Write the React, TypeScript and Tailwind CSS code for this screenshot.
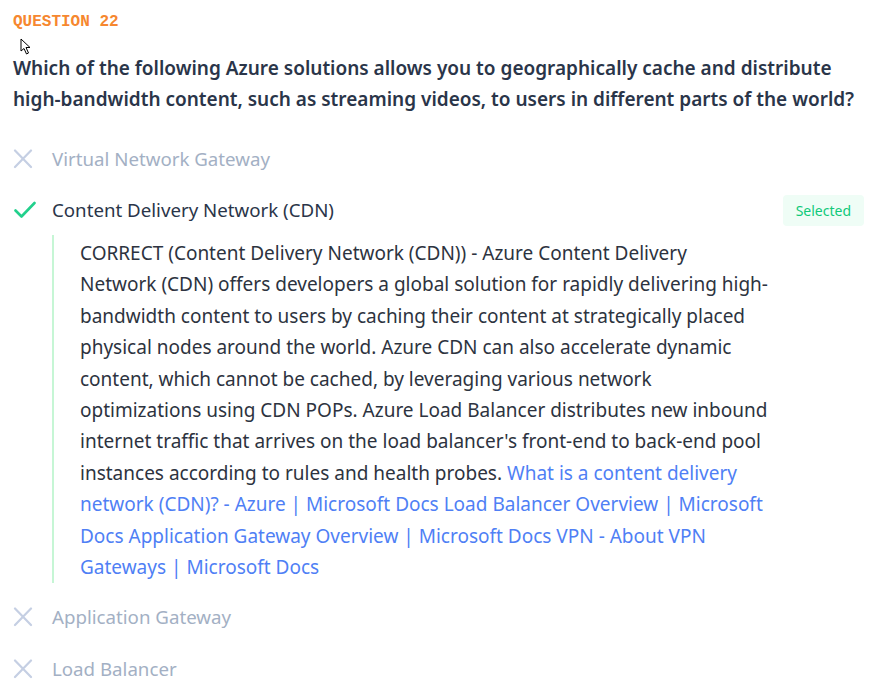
const X = () => (
  <svg width="20" height="20" viewBox="0 0 20 20" fill="none" stroke="#c5cfe3" strokeWidth="2.2" strokeLinecap="round">
    <path d="M2 1.5 L18 18 M18 1.5 L2 18" />
  </svg>
);

const Check = () => (
  <svg width="22" height="18" viewBox="0 0 22 18" fill="none" stroke="#22d08c" strokeWidth="2.6" strokeLinecap="round" strokeLinejoin="round">
    <path d="M1.5 9.5 L7.5 15.5 L20.5 2" />
  </svg>
);

function Option({ label }: { label: string }) {
  return (
    <div className="flex h-[52px] items-center">
      <div className="flex w-[39px] pl-[0px]">
        <X />
      </div>
      <span className="text-[18.7px] text-[#a3b0c4]">{label}</span>
    </div>
  );
}

export default function App() {
  return (
    <div className="relative min-h-[688px] w-[894px] bg-white px-[13px] font-['Segoe_UI','Noto_Sans',sans-serif] text-[#2d3748]">
      <svg className="absolute left-[20px] top-[38px]" width="13" height="17" viewBox="0 0 13 17">
        <path d="M1 1 L1 13 L4 10.5 L6.5 16 L8.5 15 L6 9.5 L10 9.5 Z" fill="#fff" stroke="#000" strokeWidth="1" />
      </svg>
      <div className="pt-[12px] font-['Liberation_Mono',monospace] text-[16px] font-bold leading-[20px] text-[#f6872f]">
        QUESTION 22
      </div>
      <p className="mt-[21px] max-w-[851px] text-[19px] font-semibold leading-[31px] text-[#2a3549]">
        Which of the following Azure solutions allows you to geographically cache and distribute high-bandwidth content, such as streaming videos, to users in different parts of the world?
      </p>
      <div className="mt-[18px]">
        <Option label="Virtual Network Gateway" />
        <div className="flex h-[50px] items-center justify-between">
          <div className="flex items-center">
            <div className="flex w-[39px] pl-[1px]">
              <Check />
            </div>
            <span className="text-[18.7px] text-[#2a3549]">Content Delivery Network (CDN)</span>
          </div>
          <span className="mr-[17px] rounded-[4px] bg-[#effdf6] px-[13px] py-[5px] text-[14px] text-[#10c97a]">
            Selected
          </span>
        </div>
        <div className="ml-[39px] border-l-2 border-[#c6f6d5] pt-[3px] pl-[26px]">
          <p className="max-w-[688px] text-[19px] leading-[31.4px] text-[#2d3340]">
            CORRECT (Content Delivery Network (CDN)) - Azure Content Delivery Network (CDN) offers developers a global solution for rapidly delivering high-bandwidth content to users by caching their content at strategically placed physical nodes around the world. Azure CDN can also accelerate dynamic content, which cannot be cached, by leveraging various network optimizations using CDN POPs. Azure Load Balancer distributes new inbound internet traffic that arrives on the load balancer's front-end to back-end pool instances according to rules and health probes.{" "}
            <span className="text-[#4f7ff5]">
              What is a content delivery network (CDN)? - Azure | Microsoft Docs Load Balancer Overview | Microsoft Docs Application Gateway Overview | Microsoft Docs VPN - About VPN Gateways | Microsoft Docs
            </span>
          </p>
        </div>
        <div className="mt-[8px]">
          <Option label="Application Gateway" />
          <Option label="Load Balancer" />
        </div>
      </div>
    </div>
  );
}
